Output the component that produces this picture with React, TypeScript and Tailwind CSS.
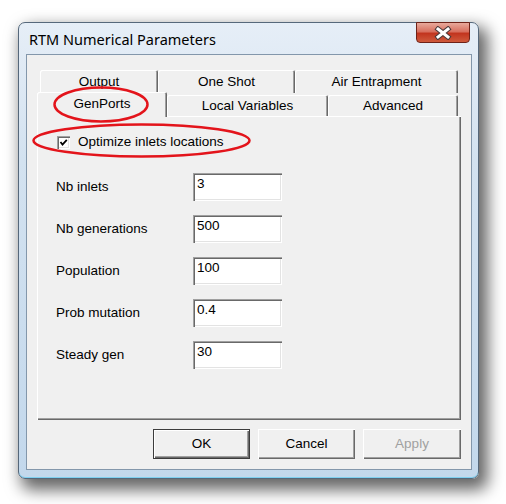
import React from 'react';

const raised = 'shadow-[inset_1px_1px_#ffffff,inset_-1px_-1px_#696969,inset_-2px_-2px_#a0a0a0]';
const sunken = 'shadow-[inset_1px_1px_#a0a0a0,inset_2px_2px_#696969,inset_-1px_-1px_#ffffff,inset_-2px_-2px_#e3e3e3]';
const tabEdge = 'rounded-t-[2px] shadow-[inset_1px_1px_#ffffff,inset_-1px_0_#696969,inset_-2px_0_#a0a0a0]';

const backTabs = [
  { name: 'Output', w: 'w-[118px]' },
  { name: 'One Shot', w: 'w-[137px]' },
  { name: 'Air Entrapment', w: 'w-[163px]' },
];

const fields = [
  { label: 'Nb inlets', value: '3' },
  { label: 'Nb generations', value: '500' },
  { label: 'Population', value: '100' },
  { label: 'Prob mutation', value: '0.4' },
  { label: 'Steady gen', value: '30' },
];

const CloseButton: React.FC = () => (
  <div className="w-[54px] h-[21px] -mt-[1px] mr-[8px] rounded-b-[4px] border border-[#6e2218] bg-[linear-gradient(180deg,#e8a99b_0%,#d8705f_45%,#c2351f_55%,#cf5a3c_100%)] flex items-center justify-center">
    <svg width="18" height="14" viewBox="0 0 18 14">
      <path d="M4 3 L14 11 M14 3 L4 11" stroke="#4a3a3a" strokeWidth="5" strokeLinecap="square" />
      <path d="M4 3 L14 11 M14 3 L4 11" stroke="#ffffff" strokeWidth="3" strokeLinecap="square" />
    </svg>
  </div>
);

const App: React.FC = () => {
  return (
    <div className="relative w-[506px] h-[504px] bg-white pt-[22px] pl-[18px] font-['Liberation_Sans',Arial,sans-serif] text-[13.5px] leading-[16px] text-black">
      {/* Window */}
      <div className="w-[461px] h-[457px] flex flex-col rounded-[7px] border border-[#56687b] bg-[linear-gradient(180deg,#e6eef7_0%,#d3e2f0_30%,#c3d8ec_100%)] shadow-[6px_8px_16px_3px_rgba(0,0,0,0.6),inset_0_-1px_#7fd0f0]">
        {/* Title bar */}
        <div className="h-[31px] flex justify-between items-start shrink-0">
          <span className="pl-[10px] pt-[6px] font-['Noto_Sans',sans-serif] text-[14.5px] leading-[20px] text-black">RTM Numerical Parameters</span>
          <CloseButton />
        </div>

        {/* Client area */}
        <div className="ml-[7px] w-[446px] h-[416px] border border-[#8397ab] bg-[#f0f0f0] flex flex-col px-[10px] pt-[15px] pb-[10px]">
          {/* Tabs, back row */}
          <div className="flex h-[23px] ml-[3px]">
            {backTabs.map((t) => (
              <div key={t.name} className={`${t.w} h-[23px] ${tabEdge} bg-[#f0f0f0] flex justify-center pt-[4px]`}>
                {t.name}
              </div>
            ))}
          </div>
          {/* Tabs, front row */}
          <div className="flex h-[23px] items-end">
            <div className={`relative z-10 w-[130px] h-[25px] -mb-[1px] ${tabEdge} bg-[#f0f0f0] flex justify-center pt-[4px]`}>
              GenPorts
            </div>
            <div className={`w-[161px] h-[21px] ${tabEdge} bg-[#f0f0f0] flex justify-center pt-[3px]`}>
              Local Variables
            </div>
            <div className={`w-[130px] h-[21px] ${tabEdge} bg-[#f0f0f0] flex justify-center pt-[3px]`}>
              Advanced
            </div>
          </div>

          {/* Tab page */}
          <div className={`h-[304px] ${raised} pl-[19px] pt-[18px]`}>
            <div className="flex items-center h-[16px] gap-[8px]">
              <div className={`ml-[1px] w-[13px] h-[13px] bg-white ${sunken} flex items-center justify-center`}>
                <svg width="9" height="9" viewBox="0 0 9 9">
                  <path d="M1.5 4 L3.5 6.5 L7.8 1.8" stroke="#000" strokeWidth="1.8" fill="none" />
                </svg>
              </div>
              <span>Optimize inlets locations</span>
            </div>

            <div className="mt-[23px] grid grid-cols-[137px_89px] gap-y-[14px]">
              {fields.map((f) => (
                <React.Fragment key={f.label}>
                  <div className="h-[28px] flex items-center">{f.label}</div>
                  <div className={`h-[28px] bg-white ${sunken} pl-[4px] pt-[3px]`}>{f.value}</div>
                </React.Fragment>
              ))}
            </div>
          </div>

          {/* Buttons */}
          <div className="mt-[9px] flex justify-end gap-[8px]">
            <div className="w-[97px] h-[30px] border border-[#3c3c3c] bg-[#f0f0f0] shadow-[inset_1px_1px_#ffffff,inset_-1px_-1px_#696969,inset_-2px_-2px_#a0a0a0] flex items-center justify-center">
              OK
            </div>
            <div className={`w-[97px] h-[30px] bg-[#f0f0f0] ${raised} flex items-center justify-center`}>
              Cancel
            </div>
            <div className={`w-[98px] h-[30px] bg-[#f0f0f0] ${raised} flex items-center justify-center text-[#a0a0a0]`}>
              Apply
            </div>
          </div>
        </div>
      </div>

      {/* Red annotation ellipses */}
      <svg className="absolute left-0 top-0 z-20 pointer-events-none" width="506" height="504">
        <ellipse cx="101" cy="104.5" rx="46.5" ry="17" fill="none" stroke="#e3141b" strokeWidth="2.5" />
        <ellipse cx="141.5" cy="140.5" rx="108" ry="16" fill="none" stroke="#e3141b" strokeWidth="2.5" />
      </svg>
    </div>
  );
};

export default App;
